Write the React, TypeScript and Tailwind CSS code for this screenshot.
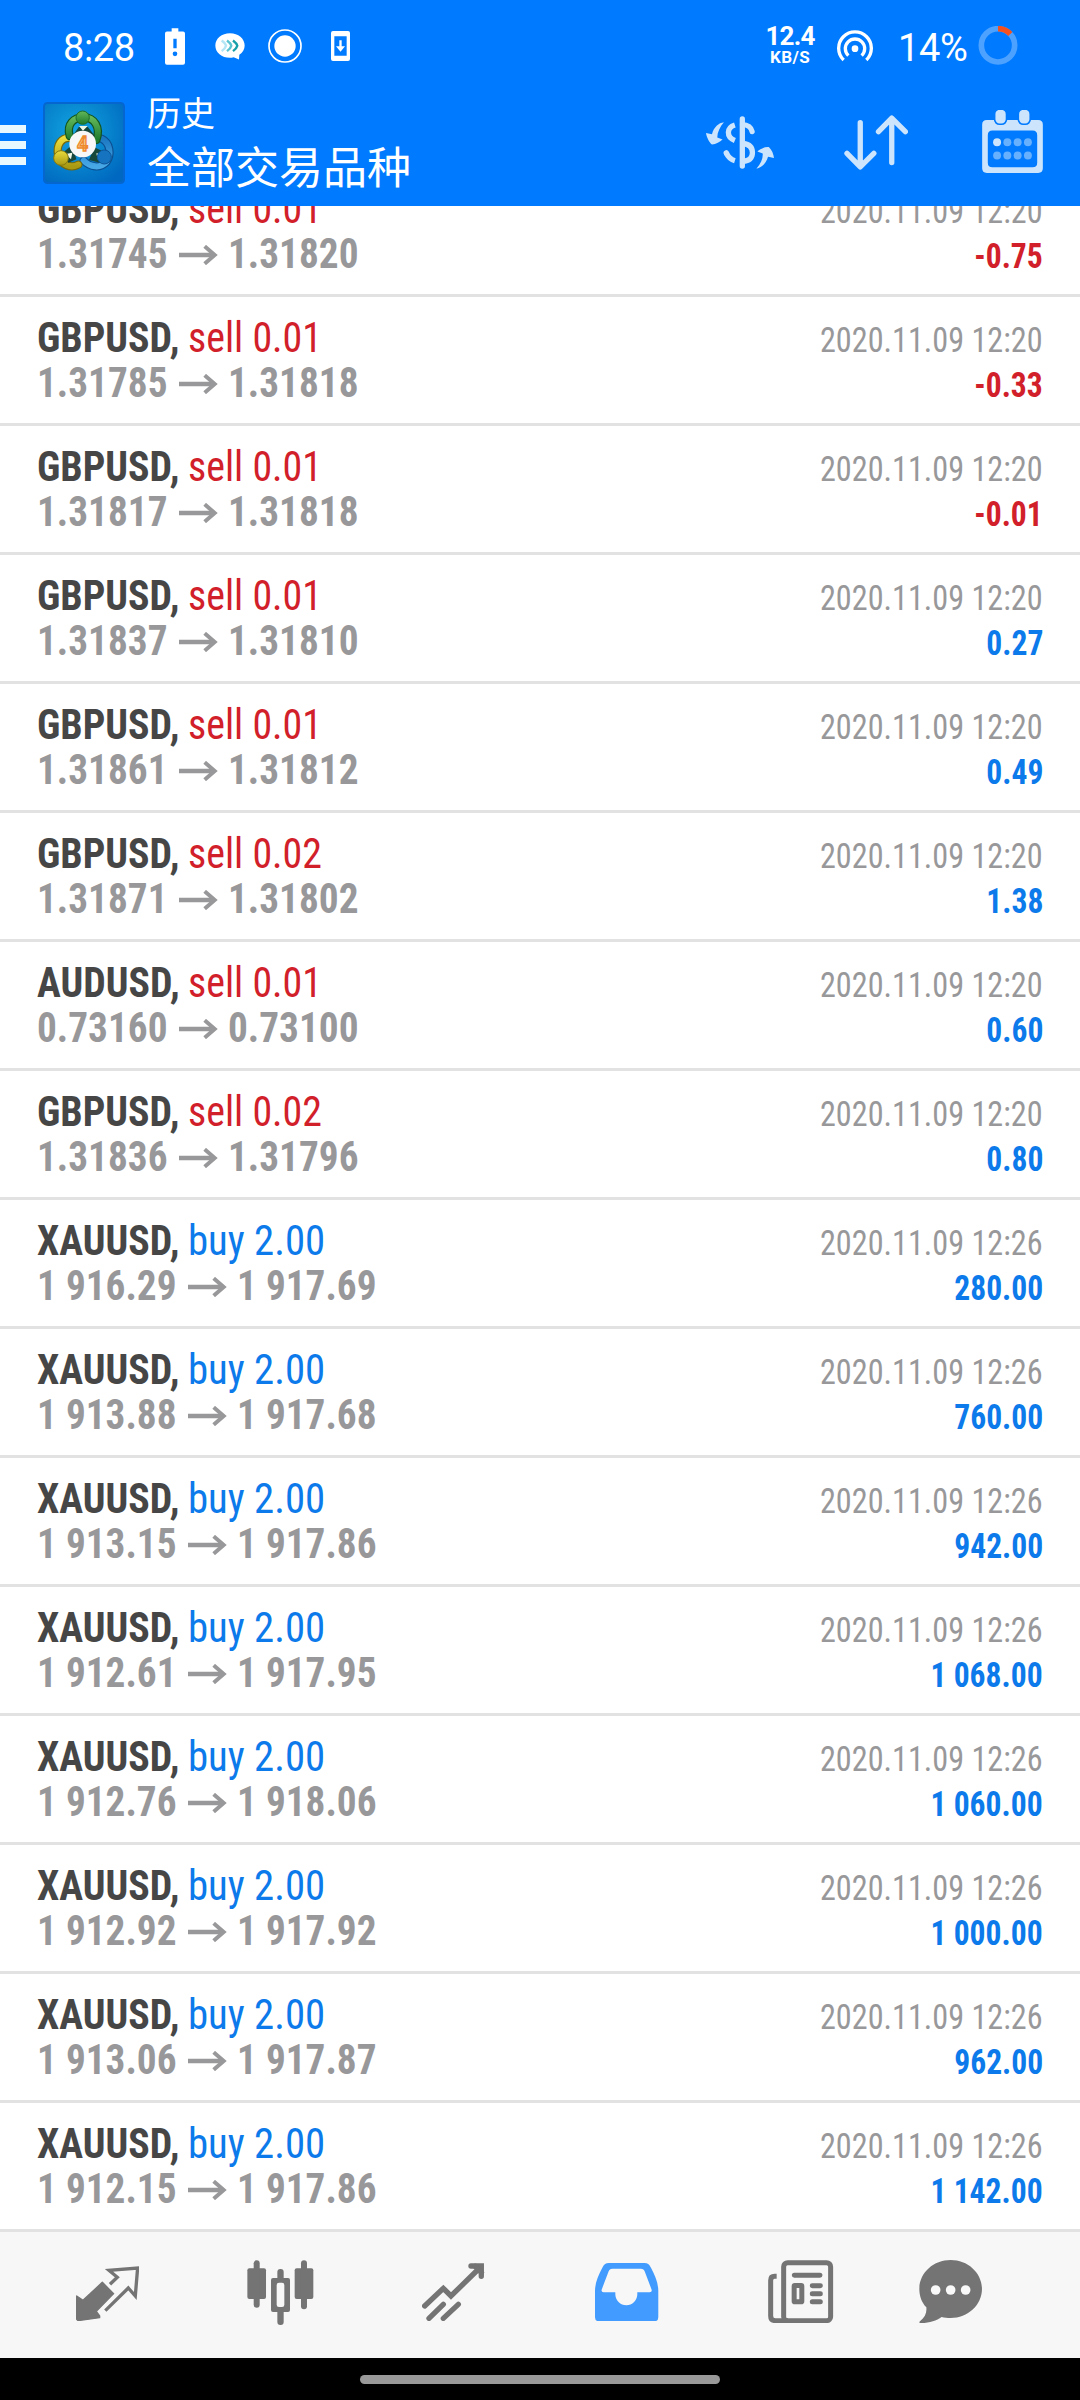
import * as React from 'react'
import { clsx } from 'clsx'

interface Deal {
  symbol: string
  side: 'sell' | 'buy'
  volume: string
  open: string
  close: string
  time: string
  profit: string
}

function deal(
  symbol: string,
  side: 'sell' | 'buy',
  volume: string,
  open: string,
  close: string,
  time: string,
  profit: string,
): Deal {
  return { symbol, side, volume, open, close, time: `2020.11.09 ${time}`, profit }
}

const deals: Deal[] = [
  deal('GBPUSD', 'sell', '0.01', '1.31745', '1.31820', '12:20', '-0.75'),
  deal('GBPUSD', 'sell', '0.01', '1.31785', '1.31818', '12:20', '-0.33'),
  deal('GBPUSD', 'sell', '0.01', '1.31817', '1.31818', '12:20', '-0.01'),
  deal('GBPUSD', 'sell', '0.01', '1.31837', '1.31810', '12:20', '0.27'),
  deal('GBPUSD', 'sell', '0.01', '1.31861', '1.31812', '12:20', '0.49'),
  deal('GBPUSD', 'sell', '0.02', '1.31871', '1.31802', '12:20', '1.38'),
  deal('AUDUSD', 'sell', '0.01', '0.73160', '0.73100', '12:20', '0.60'),
  deal('GBPUSD', 'sell', '0.02', '1.31836', '1.31796', '12:20', '0.80'),
  deal('XAUUSD', 'buy', '2.00', '1 916.29', '1 917.69', '12:26', '280.00'),
  deal('XAUUSD', 'buy', '2.00', '1 913.88', '1 917.68', '12:26', '760.00'),
  deal('XAUUSD', 'buy', '2.00', '1 913.15', '1 917.86', '12:26', '942.00'),
  deal('XAUUSD', 'buy', '2.00', '1 912.61', '1 917.95', '12:26', '1 068.00'),
  deal('XAUUSD', 'buy', '2.00', '1 912.76', '1 918.06', '12:26', '1 060.00'),
  deal('XAUUSD', 'buy', '2.00', '1 912.92', '1 917.92', '12:26', '1 000.00'),
  deal('XAUUSD', 'buy', '2.00', '1 913.06', '1 917.87', '12:26', '962.00'),
  deal('XAUUSD', 'buy', '2.00', '1 912.15', '1 917.86', '12:26', '1 142.00'),
]

function StatusBar() {
  return (
    <div className="flex h-[92px] items-center pr-[62px] pl-[63px] font-['Roboto',sans-serif] text-[38px] leading-[44px] tracking-[-0.4px] text-white">
      <span className="mt-[3px] w-[72px]">8:28</span>

      {/* low battery */}
      <svg className="ml-[30px] h-[37px] w-[20px]" viewBox="0 0 60 110">
        <path
          fill="#fff"
          fillRule="evenodd"
          d="M20 0H40V10H54Q60 10 60 16V104Q60 110 54 110H6Q0 110 0 104V16Q0 10 6 10H20ZM25 32V60H35V32ZM30 70A7 7 0 1 0 30 84A7 7 0 1 0 30 70Z"
        />
      </svg>

      {/* chat bubble */}
      <svg className="ml-[30px] h-[27px] w-[30px]" viewBox="0 0 90 80">
        <path d="M45 0C70 0 89 16 89 37C89 48 83 58 73 65L72 79L56 72C52 73 48 74 45 74C20 74 1 58 1 37C1 16 20 0 45 0Z" fill="#fff" />
        <g fill="none" strokeWidth="7">
          <path d="M20 22C28 28 32 33 33 38C32 43 28 48 20 54" stroke="#b5e6f5" />
          <path d="M36 22C44 28 48 33 49 38C48 43 44 48 36 54" stroke="#5cc4d0" />
          <path d="M54 22C62 28 66 33 67 38C66 43 62 48 54 54" stroke="#18a0a8" />
        </g>
      </svg>

      {/* screen recorder */}
      <svg className="ml-[23px] h-[34px] w-[34px]" viewBox="0 0 102 102">
        <circle cx="51" cy="51" r="48" fill="none" stroke="#fff" strokeWidth="5" />
        <circle cx="51" cy="51" r="32" fill="#fff" />
      </svg>

      {/* pending update */}
      <svg className="ml-[29px] h-[30px] w-[19px]" viewBox="0 0 57 90">
        <path fill="#fff" fillRule="evenodd" d="M6 0H51Q57 0 57 6V84Q57 90 51 90H6Q0 90 0 84V6Q0 0 6 0ZM10 16V74H47V16Z" />
        <path d="M25 28H32V46H42L28.5 62L15 46H25Z" fill="#fff" />
      </svg>

      <div className="-mt-[3px] ml-auto flex w-[52px] flex-col items-center font-bold">
        <span className="text-[26px] leading-[22px] tracking-[-0.8px]">12.4</span>
        <span className="mt-[2px] text-[17px] leading-[16px] tracking-[0.4px]">KB/S</span>
      </div>

      {/* hotspot */}
      <svg className="ml-[21px] h-[32px] w-[36px]" viewBox="0 0 108 94" fill="none" stroke="#fff" strokeWidth="10">
        <path d="M20 89A49 49 0 1 1 88 89" />
        <path d="M34 76A29 29 0 1 1 74 76" />
        <circle cx="54" cy="55" r="10" fill="#fff" stroke="none" />
      </svg>

      <span className="mt-[3px] ml-[25px] w-[68px]">14%</span>

      <svg className="ml-[12px] h-[40px] w-[40px]" viewBox="0 0 120 120" fill="none" strokeWidth="17">
        <circle cx="60" cy="58" r="50" stroke="#4da2ff" />
        <path d="M60 8A50 50 0 0 1 97 24" stroke="#f4511e" />
      </svg>
    </div>
  )
}

function AppLogo() {
  return (
    <svg className="ml-[17px] h-[82px] w-[82px] shrink-0" viewBox="0 0 246 246">
      <defs>
        <radialGradient id="tile" cx="0.4" cy="0.35" r="0.75">
          <stop offset="0" stopColor="#12a4e2" />
          <stop offset="0.55" stopColor="#0784cd" />
          <stop offset="1" stopColor="#0068c0" />
        </radialGradient>
        <linearGradient id="green" x1="0" y1="0" x2="0" y2="1">
          <stop offset="0" stopColor="#63b85a" />
          <stop offset="1" stopColor="#1e7a2c" />
        </linearGradient>
        <linearGradient id="yellow" x1="0" y1="0" x2="0" y2="1">
          <stop offset="0" stopColor="#ecdc3c" />
          <stop offset="1" stopColor="#a99a14" />
        </linearGradient>
        <linearGradient id="blue" x1="0" y1="0" x2="0" y2="1">
          <stop offset="0" stopColor="#1b78c2" />
          <stop offset="1" stopColor="#48a8e6" />
        </linearGradient>
      </defs>
      <rect x="3" y="3" width="240" height="240" rx="10" fill="url(#tile)" stroke="#0566d0" strokeWidth="6" />
      {/* three linked figures */}
      <g fill="none" strokeLinecap="round">
        <path d="M176 110C202 122 206 158 190 180C172 200 142 196 122 176" stroke="#0b4f92" strokeWidth="25" />
        <path d="M176 110C202 122 206 158 190 180C172 200 142 196 122 176" stroke="url(#blue)" strokeWidth="18" />
        <path d="M84 108C56 104 38 128 46 162C56 190 84 200 106 188" stroke="#75690c" strokeWidth="25" />
        <path d="M84 108C56 104 38 128 46 162C56 190 84 200 106 188" stroke="url(#yellow)" strokeWidth="18" />
        <path d="M80 102C70 66 92 46 122 46C154 46 174 76 160 114" stroke="#12541f" strokeWidth="25" />
        <path d="M80 102C70 66 92 46 122 46C154 46 174 76 160 114" stroke="url(#green)" strokeWidth="18" />
      </g>
      <path d="M90 100L108 74H134L156 102L140 116ZM62 150L88 128L100 172L76 182ZM184 150L154 136L138 174L170 182Z" fill="#17473a" />
      <path d="M108 72L120 86L134 72ZM68 156L88 152L84 172ZM180 156L160 154L164 172Z" fill="#eef7e6" />
      <circle cx="119" cy="47" r="20" fill="url(#green)" stroke="#1c6d2a" strokeWidth="3" />
      <circle cx="54" cy="168" r="22" fill="url(#yellow)" stroke="#85780f" strokeWidth="3" />
      <circle cx="184" cy="165" r="21" fill="#1573c0" stroke="#0c5599" strokeWidth="3" />
      <circle cx="119" cy="126" r="40" fill="#f7f7f8" />
      <text x="119" y="146" textAnchor="middle" fontSize="58" fontWeight="bold" fill="#f9c98a" stroke="#ee8a2e" strokeWidth="4" fontFamily="Roboto, sans-serif">
        4
      </text>
    </svg>
  )
}

function CurrencyIcon() {
  return (
    <svg className="h-[53px] w-[68px]" viewBox="0 0 205 158" fill="none" stroke="#cce5fd" strokeWidth="16">
      <path d="M109.500 8V150" strokeLinecap="round" />
      <path d="M87 26C62 34 60 62 87 73" />
      <path d="M110 25C126 25 137 34 139 46" strokeLinecap="round" />
      <path d="M112 82C130 84 140 92 140 110C140 126 130 135 112 135" />
      <path d="M61 110C66 122 74 130 87 134" />
      <path d="M61 110L62 112" strokeLinecap="round" />
      <g fill="#cce5fd" stroke="none">
        <path d="M54 18C38 20 24 32 18 54L0 50C2 64 10 78 18 85C30 84 42 78 50 70L34 64C34 48 42 32 54 18Z" />
        <path d="M152 158C166 142 172 126 171 112L155 106C164 97 178 92 190 93C198 100 204 114 205 126L187 122C182 140 170 154 152 158Z" />
      </g>
    </svg>
  )
}

function SortIcon() {
  return (
    <svg
      className="ml-[70px] h-[55px] w-[64px]"
      viewBox="0 0 193 165"
      fill="none"
      stroke="#cce5fd"
      strokeWidth="16"
      strokeLinecap="round"
      strokeLinejoin="round"
    >
      <path d="M49 23V155M9 115L49 156L90 115" />
      <path d="M144 143V10M104 50L144 9L185 50" />
    </svg>
  )
}

function CalendarIcon() {
  return (
    <svg className="-mt-[2px] ml-[74px] h-[63px] w-[61px]" viewBox="0 0 183 190">
      <path
        fill="#cce5fd"
        fillRule="evenodd"
        d="M14 30H169Q183 30 183 44V176Q183 190 169 190H14Q0 190 0 176V44Q0 30 14 30ZM31 62Q17 62 17 76V159Q17 173 31 173H152Q166 173 166 159V76Q166 62 152 62Z"
      />
      <g fill="#cce5fd" stroke="#007aff" strokeWidth="5">
        <rect x="37.500" y="-3" width="36" height="46" rx="15" />
        <rect x="109" y="-3" width="36" height="46" rx="15" />
      </g>
      {[97, 137].map((y) =>
        [45, 76, 107, 138].map((x) => (
          <circle key={`${x}-${y}`} cx={x} cy={y} r="12" fill={x === 45 && y === 97 ? '#cce5fd' : '#66b0fe'} />
        )),
      )}
    </svg>
  )
}

function Toolbar() {
  return (
    <div className="flex h-[114px] items-center pr-[37px]">
      <div className="mt-[-9px] flex w-[26px] flex-col gap-[8px]">
        <div className="h-[8px] bg-[#e8f8ff]" />
        <div className="h-[8px] bg-[#e8f8ff]" />
        <div className="h-[8px] bg-[#e8f8ff]" />
      </div>
      <div className="mt-[-12px]">
        <AppLogo />
      </div>
      <div className="ml-[22px] flex flex-col self-start font-['Noto_Sans_CJK_SC',sans-serif] text-white">
        <span className="text-[34px] leading-[50px] -mt-[5px]">历史</span>
        <span className="text-[44px] leading-[56px]">全部交易品种</span>
      </div>
      <div className="mt-[-13px] ml-auto flex items-center">
        <CurrencyIcon />
        <SortIcon />
        <CalendarIcon />
      </div>
    </div>
  )
}

function PriceArrow() {
  return (
    <svg className="mt-[14px] mr-[10px] ml-[2px] h-[20px] w-[39px]" viewBox="0 0 117 60" fill="none" stroke="#98989a" strokeWidth="13">
      <path d="M0 30H106" />
      <path d="M77 4L107 30L77 56" strokeWidth="12" />
    </svg>
  )
}

function DealRow({ item, last }: { item: Deal; last: boolean }) {
  const sell = item.side === 'sell'
  return (
    <div
      className={clsx(
        'flex shrink-0 justify-between pr-[37px] pl-[37px]',
        last ? 'h-[126px]' : 'h-[129px] border-b-[3px] border-[#e2e2e2]',
      )}
    >
      <div className="pt-[18px] text-[42px] leading-[45px] whitespace-pre">
        <div className="flex h-[45px]">
          <span className="w-[151px] origin-left scale-x-[0.948] font-bold text-[#464646]">{item.symbol},</span>
          <span
            className={clsx('origin-left', sell ? 'scale-x-[0.95] text-[#d2202a]' : 'scale-x-[0.97] text-[#0c7aea]')}
          >
            {item.side} {item.volume}
          </span>
        </div>
        <div className="flex h-[45px] font-bold text-[#98989a]">
          <span className="origin-left scale-x-[0.935]">{item.open}</span>
          <PriceArrow />
          <span className="origin-left scale-x-[0.935]">{item.close}</span>
        </div>
      </div>
      <div className="flex flex-col items-end pt-[20.5px] text-[34.5px] leading-[45px] whitespace-pre">
        <span className="origin-right scale-x-[0.933] text-[#98989a]">{item.time}</span>
        <span
          className={clsx(
            'origin-right scale-x-[0.915] font-bold',
            item.profit.startsWith('-') ? 'text-[#d2202a]' : 'text-[#0c7aea]',
          )}
        >
          {item.profit}
        </span>
      </div>
    </div>
  )
}

function NavItem({ className, children }: { className: string; children: React.ReactNode }) {
  return <div className={clsx('flex shrink-0 justify-center', className)}>{children}</div>
}

function BottomNav() {
  return (
    <nav className="flex h-[129px] items-start border-t-[3px] border-[#e2e2e2] bg-[#f7f7f7] pl-[21px]">
      {/* quotes */}
      <NavItem className="w-[172.6px] pt-[33.7px]">
        <svg className="h-[55.3px] w-[63.3px]" viewBox="0 0 190 166">
          <path
            d="M79 49L113 83L61 136L71 150V155L6 164L2 160V90L21 103Z"
            fill="#747474"
            stroke="#747474"
            strokeWidth="4"
            strokeLinejoin="round"
          />
          <path d="M102 55L124 34L99 13L185 6L178 90L157 66L88 134" fill="none" stroke="#747474" strokeWidth="10" />
        </svg>
      </NavItem>
      {/* charts */}
      <NavItem className="w-[173.2px] pt-[28px]">
        <svg className="h-[65.3px] w-[66.7px]" viewBox="0 0 200 196" fill="#747474">
          <rect x="1" y="25" width="56" height="92" rx="6" />
          <rect x="20" y="1" width="18" height="142" rx="9" />
          <rect x="143" y="25" width="56" height="92" rx="6" />
          <rect x="162" y="1" width="18" height="147" rx="9" />
          <rect x="91" y="27" width="19" height="168" rx="9" />
          <rect x="72" y="54" width="57" height="102" rx="6" />
          <rect x="89" y="68" width="23" height="73" rx="7" fill="#f7f7f7" />
        </svg>
      </NavItem>
      {/* trade */}
      <NavItem className="w-[173.2px] pt-[30.7px]">
        <svg
          className="h-[58.7px] w-[62.3px]"
          viewBox="0 0 187 176"
          fill="none"
          stroke="#747474"
          strokeWidth="16"
          strokeLinecap="round"
        >
          <path d="M8 129L64 76L87 99L176 12" />
          <path d="M147 9H178V40" />
          <path d="M160 10L178 28" />
          <path d="M21 166L64 124M64 166L109 124" />
        </svg>
      </NavItem>
      {/* history, current tab */}
      <NavItem className="w-[174px] pt-[30.7px]">
        <svg className="h-[58.3px] w-[63.3px]" viewBox="0 0 190 175">
          <path
            fill="#429bff"
            fillRule="evenodd"
            d="M42 0H148C158 0 163 4 168 14C180 36 190 60 190 84V163Q190 175 178 175H12Q0 175 0 163V84C0 60 10 36 22 14C27 4 32 0 42 0ZM52 17C46 17 43 20 41 25L20 80Q18 88 26 88H61V94A33 33 0 0 0 127 94V88H164Q172 88 170 80L149 25C147 20 144 17 138 17Z"
          />
        </svg>
      </NavItem>
      {/* news */}
      <NavItem className="w-[174px] pt-[28px]">
        <svg className="h-[63.3px] w-[65.3px]" viewBox="0 0 196 190" fill="none" stroke="#747474" strokeWidth="15">
          <rect x="47" y="8" width="141" height="174" rx="12" />
          <path d="M26 49H20Q8 49 8 61V168Q8 182 22 182H60" />
          <path d="M79 46H156M133 77H157M133 101H157M133 125H157" strokeLinecap="round" />
          <rect x="78.500" y="76.500" width="23" height="49" rx="2" />
        </svg>
      </NavItem>
      {/* messages */}
      <NavItem className="w-[126px] pt-[28px]">
        <svg className="h-[63.3px] w-[63.3px]" viewBox="0 0 190 190">
          <path
            fill="#747474"
            d="M95 0C147 0 189 39 189 87C189 135 147 174 95 174C86 174 76 173 68 171C52 182 30 190 3 189Q-1 187 3 184C18 172 24 158 22 142C8 127 1 108 1 87C1 39 43 0 95 0Z"
          />
          <circle cx="50" cy="90" r="14.500" fill="#f9f9f9" />
          <circle cx="95" cy="90" r="14.500" fill="#f9f9f9" />
          <circle cx="140" cy="90" r="14.500" fill="#f9f9f9" />
        </svg>
      </NavItem>
    </nav>
  )
}

export default function App() {
  return (
    <div className="flex h-[2400px] w-[1080px] flex-col overflow-hidden bg-white">
      <header className="h-[206px] shrink-0 bg-[#007aff]">
        <StatusBar />
        <Toolbar />
      </header>

      {/* scrolled to the end, the oldest row is half under the header */}
      <main className="flex h-[2023px] shrink-0 flex-col justify-end overflow-hidden font-['Roboto_Condensed',Roboto,sans-serif]">
        {deals.map((item, idx) => (
          <DealRow key={idx} item={item} last={idx === deals.length - 1} />
        ))}
      </main>

      <BottomNav />

      <div className="flex h-[42px] shrink-0 justify-center bg-black pt-[17px]">
        <div className="h-[9px] w-[360px] rounded-full bg-[#999999]" />
      </div>
    </div>
  )
}
